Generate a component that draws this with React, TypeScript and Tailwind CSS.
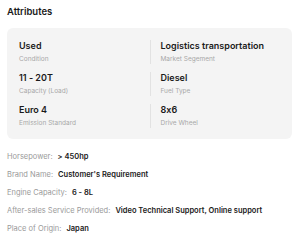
import React from 'react';

const cells = [
  ['Used', 'Condition'],
  ['Logistics transportation', 'Market Segement'],
  ['11 - 20T', 'Capacity (Load)'],
  ['Diesel', 'Fuel Type'],
  ['Euro 4', 'Emission Standard'],
  ['8x6', 'Drive Wheel'],
];

const rows = [
  ['Horsepower:', '> 450hp'],
  ['Brand Name:', "Customer's Requirement"],
  ['Engine Capacity:', '6 - 8L'],
  ['After-sales Service Provided:', 'Video Technical Support, Online support'],
  ['Place of Origin:', 'Japan'],
];

export default function App() {
  return (
    <div className="w-[300px] h-[246px] bg-white px-[7px] pt-[6px] text-[#1a1a1a] font-['Inter',sans-serif] [font-feature-settings:'calt'_0]">
      <h2 className="text-[9.5px] leading-[12px] font-semibold">Attributes</h2>

      <div className="mt-[10px] w-[285px] bg-[#f4f4f4] rounded-[6px] pl-3 pr-3 pt-3 pb-[11px] grid grid-cols-2 gap-y-2">
        {cells.map(([value, label], i) => (
          <div key={label} className={i % 2 === 1 ? 'border-l border-[#e2e2e2] pl-[10px]' : ''}>
            <div className="text-[9px] leading-[12px] font-semibold">{value}</div>
            <div className="mt-[2px] text-[6.5px] leading-[10px] text-[#a8a8a8]">{label}</div>
          </div>
        ))}
      </div>

      <div className="mt-[13px] flex flex-col gap-[8px]">
        {rows.map(([label, value]) => (
          <div key={label} className="flex gap-[5px] text-[7.5px] leading-[10px] whitespace-nowrap">
            <span className="text-[#9a9a9a]">{label}</span>
            <span className="font-semibold">{value}</span>
          </div>
        ))}
      </div>
    </div>
  );
}
